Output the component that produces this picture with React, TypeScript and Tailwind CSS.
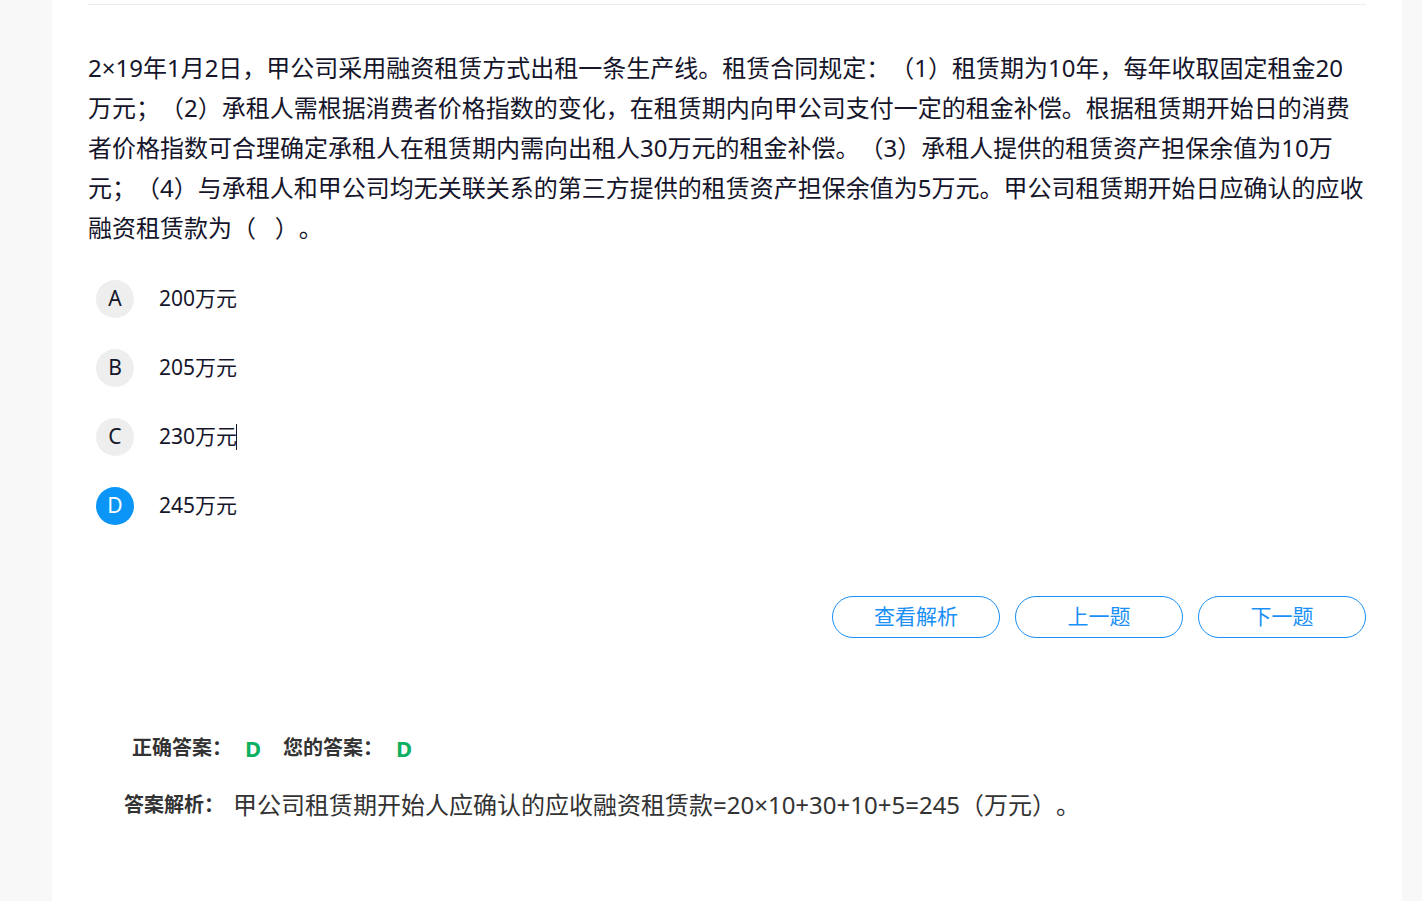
import React from "react";

const options = [
  { key: "A", text: "200万元" },
  { key: "B", text: "205万元" },
  { key: "C", text: "230万元", caret: true },
  { key: "D", text: "245万元", selected: true },
];

export default function App() {
  return (
    <div
      className="min-h-[901px] w-full bg-[#f8f8f8] [text-spacing-trim:space-all]"
      style={{ fontFamily: '"Noto Sans", "Noto Sans CJK SC", sans-serif' }}
    >
      <div className="ml-[52px] mr-[20px] min-h-[901px] bg-white px-[36px] pt-[4px]">
        <div className="h-px w-full bg-[#ececec]" />
        <div className="pt-[43px] text-[24px] leading-[40px] text-[#15152b]">
          2×19年1月2日，甲公司采用融资租赁方式出租一条生产线。租赁合同规定：（1）租赁期为10年，每年收取固定租金20万元；（2）承租人需根据消费者价格指数的变化，在租赁期内向甲公司支付一定的租金补偿。根据租赁期开始日的消费者价格指数可合理确定承租人在租赁期内需向出租人30万元的租金补偿。（3）承租人提供的租赁资产担保余值为10万元；（4）与承租人和甲公司均无关联关系的第三方提供的租赁资产担保余值为5万元。甲公司租赁期开始日应确认的应收融资租赁款为（{"\u00a0\u00a0\u00a0"}）。
        </div>
        <div className="mt-[32px] flex flex-col gap-[31px] pl-[8px]">
          {options.map((o) => (
            <div key={o.key} className="flex items-center">
              <div
                className={
                  o.selected
                    ? "flex h-[38px] w-[38px] items-center justify-center rounded-full bg-[#0b95f7] text-[21px] text-white"
                    : "flex h-[38px] w-[38px] items-center justify-center rounded-full bg-[#eeeeee] text-[21px] text-[#15152b]"
                }
              >
                {o.key}
              </div>
              <div className="ml-[25px] flex items-center text-[21px] text-[#15152b]">
                {o.text}
                {o.caret && <span className="ml-[-1px] inline-block h-[26px] w-px bg-[#15152b]" />}
              </div>
            </div>
          ))}
        </div>
        <div className="mt-[71px] flex justify-end gap-[15px]">
          {["查看解析", "上一题", "下一题"].map((t) => (
            <button
              key={t}
              className="flex h-[42px] w-[168px] items-center justify-center rounded-full border border-[#1a8ff5] bg-white text-[21px] text-[#1a8ff5]"
            >
              {t}
            </button>
          ))}
        </div>
        <div className="mt-[96px] flex items-center pl-[44px] text-[20px] font-bold leading-[28px] text-[#333333]">
          <span>正确答案：</span>
          <span className="ml-[13px] text-[22px] text-[#0db060]">D</span>
          <span className="ml-[22px]">您的答案：</span>
          <span className="ml-[13px] text-[22px] text-[#0db060]">D</span>
        </div>
        <div className="mt-[25px] flex items-center pl-[36px] leading-[36px] text-[#333333]">
          <span className="text-[20px] font-bold">答案解析：</span>
          <span className="ml-[9px] text-[24px]">甲公司租赁期开始人应确认的应收融资租赁款=20×10+30+10+5=245（万元）。</span>
        </div>
      </div>
    </div>
  );
}
